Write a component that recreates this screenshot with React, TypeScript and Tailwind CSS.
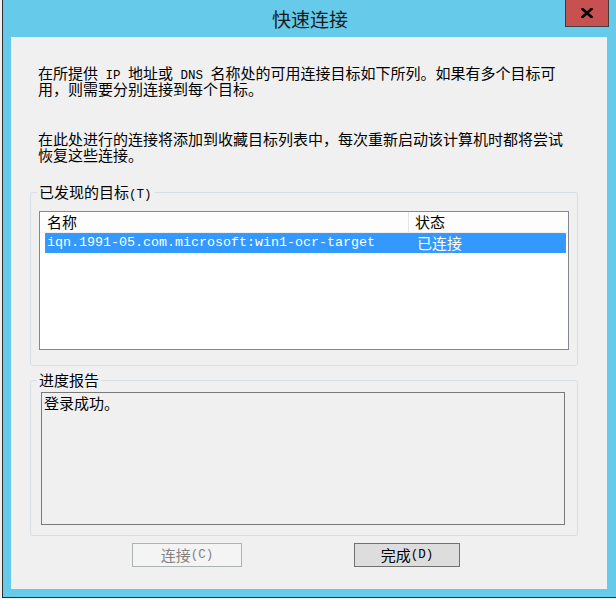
import React from "react";

// half-width run (SimSun style latin)
const H = ({ children }: { children: React.ReactNode }) => (
  <span className="whitespace-pre font-['Liberation_Mono',monospace] text-[12.5px]">{children}</span>
);

const Line = ({ children }: { children: React.ReactNode }) => (
  <div className="h-[16px] whitespace-nowrap leading-[16px]">{children}</div>
);

const CloseGlyph = () => (
  <svg width="12" height="10" viewBox="0 0 12 10">
    <path d="M1.5 1 L10.5 9 M10.5 1 L1.5 9" stroke="#000" strokeWidth="2.6" strokeLinecap="square" />
  </svg>
);

export default function App() {
  return (
    <div className="h-[599px] w-[616px] overflow-hidden bg-[#f0f0f0] font-['Noto_Sans_CJK_SC','Noto_Sans',sans-serif] text-[15px] text-black">
      <div className="ml-[2px] h-[598px] w-[615px] border-b border-l border-[#2e2e2e] bg-[#66cbea]">
        {/* title bar */}
        <div className="relative flex h-[37px] items-center justify-center">
          <span className="text-[19px] leading-none text-[#1a1a1a]">快速连接</span>
          <div className="absolute left-[562px] top-0 flex h-[27px] w-[44px] items-center justify-center border-x border-b border-[#3c3c3c] bg-[#c75050]">
            <CloseGlyph />
          </div>
        </div>

        {/* client area */}
        <div className="ml-[8px] flex h-[552px] w-[596px] flex-col bg-[#f0f0f0]">
          <div className="ml-[27px] mt-[28px]">
            <Line>
              在所提供<H> IP </H>地址或<H> DNS </H>名称处的可用连接目标如下所列。如果有多个目标可
            </Line>
            <Line>用，则需要分别连接到每个目标。</Line>
          </div>
          <div className="ml-[27px] mt-[34px]">
            <Line>在此处进行的连接将添加到收藏目标列表中，每次重新启动该计算机时都将尝试</Line>
            <Line>恢复这些连接。</Line>
          </div>

          <fieldset className="ml-[19px] mt-[21px] w-[548px] min-w-0 rounded-[3px] border border-[#d5dfe5] p-0">
            <legend className="ml-[6px] h-[16px] px-[2px] leading-[16px]">
              已发现的目标<H>(T)</H>
            </legend>
            <div className="mb-[15px] ml-[8px] mt-[11px] h-[139px] w-[530px] border border-[#828790] bg-white">
              <div className="flex h-[21px] items-center border-b border-[#f0f0f0] bg-[#fdfdfd]">
                <div className="w-[368px] pl-[7px] leading-[16px]">名称</div>
                <div className="h-full w-[2px] border-l border-[#e3e3e3] bg-white" />
                <div className="pl-[5px] leading-[16px]">状态</div>
              </div>
              <div className="ml-[5px] flex h-[20px] w-[521px] items-center border border-dotted border-[#c8812f] bg-[#3399ff] text-white">
                <div className="w-[371px] pl-[1px] font-['Liberation_Mono',monospace] text-[13.33px] leading-[16px]">
                  iqn.1991-05.com.microsoft:win1-ocr-target
                </div>
                <div className="leading-[16px]">已连接</div>
              </div>
            </div>
          </fieldset>

          <fieldset className="ml-[19px] mt-[6px] w-[548px] min-w-0 rounded-[3px] border border-[#d5dfe5] p-0">
            <legend className="ml-[6px] h-[16px] px-[2px] leading-[16px]">进度报告</legend>
            <div className="mb-[10px] ml-[10px] mt-[4px] h-[133px] w-[524px] border border-[#7a7a7a] bg-[#f0f0f0] pl-[2px] pt-[2px]">
              <div className="leading-[16px]">登录成功。</div>
            </div>
          </fieldset>

          <div className="mt-[7px] flex">
            <button
              disabled
              className="ml-[121px] flex h-[24px] w-[110px] items-center justify-center border border-[#adb2b5] bg-[#f4f4f4] leading-[16px] text-[#838383]"
            >
              连接<H>(C)</H>
            </button>
            <button className="ml-[112px] flex h-[24px] w-[106px] items-center justify-center border border-[#707070] bg-[#dddddd] leading-[16px]">
              完成<H>(D)</H>
            </button>
          </div>
        </div>
      </div>
    </div>
  );
}
